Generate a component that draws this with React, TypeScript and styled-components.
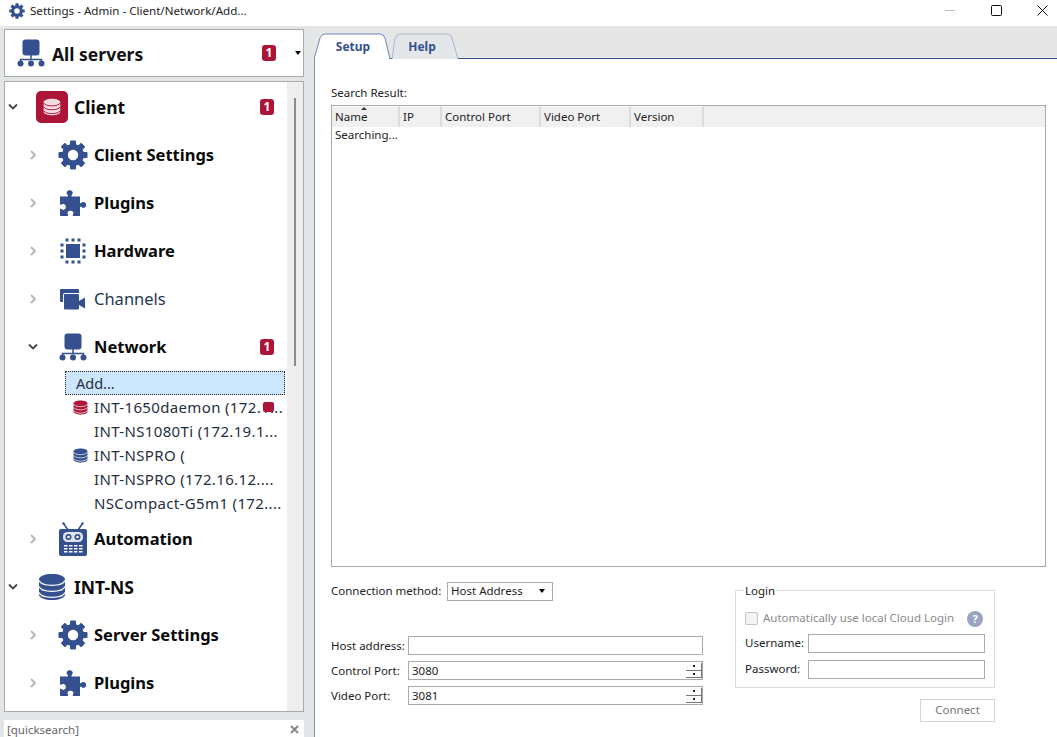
import React from "react";
import styled, { createGlobalStyle } from "styled-components";

const Global = createGlobalStyle`
  html, body { margin: 0; padding: 0; background: #fff; overflow: hidden; }
  * { box-sizing: border-box; }
  body { font-family: "Noto Sans", "Open Sans", sans-serif; color: #111; }
`;

const Blue = "#34508f";
const Red = "#ad1538";

const Window = styled.div`
  width: 1057px; height: 737px; display: flex; flex-direction: column; overflow: hidden; background: #fff;
`;
const TitleBar = styled.div`
  height: 26px; flex: none; display: flex; align-items: center; padding: 0 0 5px 9px; background: #fff;
`;
const TitleText = styled.span`
  font-size: 11.6px; margin-left: 5px; color: #222; flex: 1; white-space: nowrap;
`;
const WinButton = styled.span`
  width: 46px; height: 20px; display: flex; align-items: center; justify-content: center; margin-right: ${p => p.$mr ?? 0}px;
`;
const Body = styled.div`flex: 1; display: flex; min-height: 0;`;
const Side = styled.div`
  width: 314px; flex: none; background: #e3e6e6; padding: 3px 10px 0 4px; display: flex; flex-direction: column;
`;
const ServerCombo = styled.div`
  height: 48px; flex: none; background: #fff; border: 1px solid #aaa; display: flex; align-items: center; padding-left: 12px;
`;
const ServerName = styled.span`font-size: 17.5px; font-weight: 700; margin: 2px 0 0 7px; flex: 1;`;
const Badge = styled.span`
  width: 14px; height: 16px; border-radius: 3px; background: ${Red}; color: #fff; font-size: 12px; font-weight: 700;
  display: flex; align-items: center; justify-content: center; line-height: 1; flex: none;
`;
const ComboArrow = styled.span`
  width: 0; height: 0; border-left: 3.5px solid transparent; border-right: 3.5px solid transparent; border-top: 4px solid #000;
  margin: 0 2px 0 19px;
`;
const TreeBox = styled.div`
  margin-top: 4px; height: 631px; flex: none; background: #fff; border: 1px solid #aaa; display: flex; overflow: hidden;
`;
const Tree = styled.div`flex: 1; min-width: 0; padding-top: 1px; overflow: hidden;`;
const ScrollTrack = styled.div`width: 16px; flex: none; background: #eeeeee; padding: 16px 7px 0 7px;`;
const ScrollThumb = styled.div`width: 2px; height: 268px; background: #8b8b8b;`;
const Row = styled.div`
  height: 48px; display: flex; align-items: center; padding-left: ${p => p.$level === 0 ? 0 : 20}px; padding-right: 13px;
`;
const Chevron = styled.span`width: 16px; flex: none; display: flex; justify-content: center;`;
const IconSlot = styled.span`
  flex: none; display: flex; align-items: center; justify-content: center;
  width: 32px; height: 32px; margin-left: ${p => p.$level === 0 ? 15 : 16}px; margin-right: ${p => p.$level === 0 ? 6 : 5}px;
`;
const RowLabel = styled.span`
  font-size: ${p => p.$level === 0 ? 17.5 : 16.5}px; font-weight: ${p => p.$light ? 400 : 700}; flex: 1; white-space: nowrap;
  padding-bottom: ${p => p.$level === 0 ? 0 : 2}px;
  color: ${p => p.$light ? "#25384f" : "#0a0a0a"};
`;
const SubRow = styled.div`
  height: 24px; display: flex; align-items: center; margin-left: 68px; width: 214px; position: relative;
`;
const SubIcon = styled.span`width: 15px; flex: none; margin-right: 6px; display: flex;`;
const SubLabel = styled.span`font-size: 15px; letter-spacing: 0.35px; color: #1f2f40; white-space: nowrap; overflow: hidden;`;
const SelectedRow = styled.div`
  height: 24px; margin-left: 60px; width: 220px; background: #cbe6fd; border: 1px dotted #222; display: flex; align-items: center; padding-left: 10px;
  font-size: 14.5px; color: #1f2f40;
`;
const Overdot = styled.span`
  position: absolute; left: 190px; top: 7px; width: 11px; height: 10px; border-radius: 2px; background: ${Red};
`;
const QuickSearch = styled.div`
  margin-top: 8px; height: 18px; flex: none; background: #fff; display: flex; align-items: center; justify-content: space-between; padding: 0 5px 0 3px;
  font-size: 11.5px; color: #666;
`;
const Main = styled.div`flex: 1; min-width: 0; display: flex; flex-direction: column; background: #fff;`;
const TabStrip = styled.div`
  height: 33px; flex: none; background: #e6e6e6; border-bottom: 1px solid #34508f; display: flex; align-items: flex-end; position: relative;
`;
const Tab = styled.div`
  position: relative; width: ${p => p.$w}px; height: 26px; margin-left: ${p => p.$ml}px; margin-bottom: -1px; display: flex; align-items: center; justify-content: center;
  padding: 1px ${p => p.$pr ?? 0}px 0 0;
  font-size: 12px; font-weight: 700; color: ${Blue}; z-index: ${p => p.$active ? 2 : 1};
  & > svg { position: absolute; left: 0; top: 0; }
  & > span { position: relative; }
`;
const Panel = styled.div`
  flex: 1; min-height: 0; border-left: 1px solid #7c8fb8; padding: 26px 11px 15px 16px; display: flex; flex-direction: column; font-size: 11.5px;
`;
const PanelCaption = styled.div`height: 21px; line-height: 15px; color: #222;`;
const Table = styled.div`
  height: 462px; flex: none; border: 1px solid #aaa; background: #fff;
`;
const HeaderRow = styled.div`display: flex; height: 21px; background: #f0f0f0;`;
const HeaderCell = styled.div`
  width: ${p => p.$w}px; flex: none; border-right: 2px solid #dcdcdc; border-top: 1px solid #fff; padding-left: 3px; line-height: 19px; position: relative; color: #222;
`;
const SortMark = styled.span`
  position: absolute; left: 29px; top: 0; width: 0; height: 0; border-left: 3px solid transparent; border-right: 3px solid transparent; border-bottom: 3px solid #333;
`;
const Searching = styled.div`padding: 0 0 0 3px; line-height: 15px; color: #222;`;
const Bottom = styled.div`display: flex; margin-top: 14px; gap: 32px; align-items: flex-start;`;
const FormCol = styled.div`width: 372px; flex: none; display: flex; flex-direction: column;`;
const MethodRow = styled.div`display: flex; align-items: center; height: 20px; margin-bottom: 35px;`;
const MethodLabel = styled.span`width: 116px; flex: none; color: #222; white-space: nowrap; padding-bottom: 2px;`;
const Select = styled.div`
  width: 106px; height: 19px; border: 1px solid #aaa; display: flex; align-items: center; justify-content: space-between; padding: 0 7px 2px 3px; color: #222;
`;
const SelectArrow = styled.span`
  width: 0; height: 0; border-left: 3.5px solid transparent; border-right: 3.5px solid transparent; border-top: 4px solid #000; margin-top: 2px;
`;
const FieldRow = styled.div`display: flex; align-items: center; height: 19px; margin-bottom: 6px;`;
const LoginFieldRow = styled(FieldRow)`margin-bottom: 7px;`;
const FieldLabel = styled.span`width: ${p => p.$w}px; flex: none; color: #222; white-space: nowrap;`;
const LoginLabel = styled(FieldLabel)`padding-bottom: 3px;`;
const Input = styled.div`
  flex: 1; height: 19px; border: 1px solid #aaa; display: flex; align-items: center; justify-content: space-between; padding-left: 3px; color: #222;
`;
const Spinner = styled.span`
  width: 16px; height: 15px; flex: none; display: flex; flex-direction: column; border-right: 1px solid #777; border-bottom: 1px solid #777;
`;
const SpinPart = styled.span`
  flex: 1; display: flex; align-items: center; justify-content: center; border-bottom: ${p => p.$up ? "1px solid #777" : "none"};
  &::before { content: ""; width: 2px; height: 2px; background: #222; }
`;
const LoginCol = styled.div`width: 260px; flex: none; display: flex; flex-direction: column; align-items: flex-end; margin-top: 9px;`;
const LoginGroup = styled.div`
  width: 260px; height: 98px; border: 1px solid #dcdcdc; padding: 20px 9px 0 9px; position: relative;
`;
const Legend = styled.span`
  position: absolute; left: 8px; top: -9px; background: #fff; padding: 0 1px; color: #222; line-height: 17px;
`;
const CheckRow = styled.div`display: flex; align-items: center; height: 15px; margin-bottom: 8px; color: #8a8a8a;`;
const CheckBox = styled.span`
  width: 13px; height: 13px; border: 1px solid #c4c4c4; border-radius: 2px; background: #f4f4f4; margin-right: 5px; flex: none;
`;
const CheckText = styled.span`flex: 1; white-space: nowrap; padding-bottom: 2px;`;
const Help = styled.span`
  width: 16px; height: 16px; border-radius: 50%; background: #98a4c2; color: #fff; font-size: 11px; font-weight: 700; display: flex; align-items: center; justify-content: center; margin-right: 2px;
`;
const ConnectButton = styled.div`
  width: 75px; height: 23px; margin-top: 11px; border: 1px solid #d4d4d4; color: #777; display: flex; align-items: center; justify-content: center; padding-bottom: 2px;
`;

const Right = () => <svg width="8" height="10" viewBox="0 0 8 10"><path d="M2 1l4 4-4 4" fill="none" stroke="#b4b4b4" strokeWidth="1.8" /></svg>;
const Down = () => <svg width="10" height="8" viewBox="0 0 10 8"><path d="M1 1.5l4 4 4-4" fill="none" stroke="#444" strokeWidth="1.8" /></svg>;

const Gear = ({ size = 30 }: { size?: number }) => {
  const teeth = Array.from({ length: 8 }, (_, i) => i * 45);
  return (
    <svg width={size} height={size} viewBox="0 0 30 30">
      {teeth.map(a => <rect key={a} x="12" y="0.5" width="6" height="6" rx="1" fill={Blue} transform={`rotate(${a} 15 15)`} />)}
      <circle cx="15" cy="15" r="11" fill={Blue} />
      <circle cx="15" cy="15" r="5.2" fill="#fff" />
    </svg>
  );
};
const Puzzle = () => (
  <svg width="28" height="28" viewBox="0 0 28 28">
    <path fill={Blue} d="M1 7.500h7.500c.8 0 .8-.8.2-1.400C7.600 5 7.400 3.800 8 2.700 8.700 1.400 10.100 1 11.300 1.200c1.500.3 2.600 1.500 2.400 3-.1.800-.6 1.400-1.100 2-.5.6-.3 1.300.5 1.300H21v6c0 .7.700.9 1.200.4.700-.7 1.200-.9 2-.9 1.800.2 3 1.300 3 2.900 0 1.700-1.300 2.800-3 2.900-1 .1-1.500-.3-2-1-.5-.5-1.200-.2-1.200.5V27h-6.500c-.8 0-1-.8-.6-1.400.7-1 .7-2.200-.1-3.100-1.400-1.300-4.300-1.100-5.100.6-.4.900-.2 1.800.3 2.500.5.600.2 1.400-.5 1.400H1v-6.500c0-.7.600-.9 1.200-.5.900.6 2 .9 3 .5 1.500-.6 2-2.400 1.400-3.800-.6-1.500-2.600-2-4-1.200-.7.400-1.600.4-1.600-.5z" />
  </svg>
);
const Chip = () => (
  <svg width="26" height="26" viewBox="0 0 26 26">
    <rect x="6" y="6" width="14" height="14" fill={Blue} />
    {[5.500, 11.500, 17.500].map(p => <React.Fragment key={p}>
      <rect x={p} y="0.500" width="3" height="3" fill={Blue} />
      <rect x={p} y="22.500" width="3" height="3" fill={Blue} />
      <rect x="0.500" y={p} width="3" height="3" fill={Blue} />
      <rect x="22.500" y={p} width="3" height="3" fill={Blue} />
    </React.Fragment>)}
  </svg>
);
const Camera = () => (
  <svg width="26" height="21" viewBox="0 0 26 21">
    <path fill={Blue} d="M1 0h17a1 1 0 0 1 1 1v3H5a2 2 0 0 0-2 2v7H1a1 1 0 0 1-1-1V1a1 1 0 0 1 1-1z" />
    <rect x="4" y="5" width="15" height="15.500" rx="1" fill={Blue} />
    <path fill={Blue} d="M19 12l6-3.500v11L19 16z" />
  </svg>
);
const Net = ({ size = 28 }: { size?: number }) => (
  <svg width={size} height={size} viewBox="0 0 28 28">
    <rect x="5.500" y="0.500" width="17" height="16" rx="3" fill={Blue} />
    <path d="M14 16v5M3.500 24v-3.500h21V24" fill="none" stroke={Blue} strokeWidth="1.500" />
    <circle cx="3.500" cy="24.500" r="3" fill={Blue} />
    <circle cx="14" cy="24.500" r="3" fill={Blue} />
    <circle cx="24.500" cy="24.500" r="3" fill={Blue} />
  </svg>
);
const Database = ({ size = 28, color = Blue, line = "#fff" }: { size?: number; color?: string; line?: string }) => (
  <svg width={size} height={size} viewBox="0 0 28 28">
    <path fill={color} d="M1 6.500C1 3 7 1 14 1s13 2 13 5.500v15C27 25 21 27 14 27S1 25 1 21.500z" />
    <path d="M1 7.500C2.500 11 8 12.300 14 12.300S25.500 11 27 7.500M1 13.500C2.500 17 8 18.300 14 18.300S25.500 17 27 13.500M1 19.500C2.500 23 8 24.300 14 24.300S25.500 23 27 19.500" fill="none" stroke={line} strokeWidth="1.300" />
  </svg>
);
const ClientIcon = () => (
  <svg width="32" height="32" viewBox="0 0 32 32">
    <rect width="32" height="32" rx="5" fill={Red} />
    <g transform="translate(7 7) scale(0.64)">
      <path fill="#f6dbe0" d="M1 6.500C1 3 7 1 14 1s13 2 13 5.500v15C27 25 21 27 14 27S1 25 1 21.500z" />
      <path d="M1 7.500C2.500 11 8 12.300 14 12.300S25.500 11 27 7.500M1 13.500C2.500 17 8 18.300 14 18.300S25.500 17 27 13.500M1 19.500C2.500 23 8 24.300 14 24.300S25.500 23 27 19.500" fill="none" stroke={Red} strokeWidth="1.500" />
    </g>
  </svg>
);
const Robot = () => (
  <svg width="30" height="34" viewBox="0 0 30 34">
    <circle cx="5.500" cy="1.500" r="1.200" fill={Blue} /><circle cx="24.500" cy="1.500" r="1.200" fill={Blue} />
    <path d="M10 8L5.500 1.500M20 8l4.500-6.500" stroke={Blue} strokeWidth="1.500" />
    <rect x="1" y="7" width="28" height="27" rx="2" fill={Blue} />
    <rect x="5" y="10" width="20" height="10" rx="4.500" fill="#dfe4ef" />
    <circle cx="10.500" cy="15" r="3" fill={Blue} /><circle cx="19.500" cy="15" r="3" fill={Blue} />
    <circle cx="10.500" cy="15" r="1.300" fill="#fff" /><circle cx="19.500" cy="15" r="1.300" fill="#fff" />
    {[23, 26, 29].map(y => [6, 11, 16, 21].map(x => <rect key={`${x}-${y}`} x={x} y={y} width="3.500" height="1.500" fill="#fff" />))}
  </svg>
);

const TreeRow = ({ level, open, icon, label, light, badge }: { level: number; open?: boolean; icon: React.ReactNode; label: string; light?: boolean; badge?: boolean }) => (
  <Row $level={level}>
    <Chevron>{open ? <Down /> : <Right />}</Chevron>
    <IconSlot $level={level}>{icon}</IconSlot>
    <RowLabel $level={level} $light={light}>{label}</RowLabel>
    {badge && <Badge>1</Badge>}
  </Row>
);

const App = () => (
  <Window>
    <Global />
    <TitleBar>
      <Gear size={16} />
      <TitleText>Settings - Admin - Client/Network/Add...</TitleText>
      <WinButton>
        <svg width="11" height="2"><rect width="10" height="1" fill="#bbb" /></svg>
      </WinButton>
      <WinButton>
        <svg width="11" height="11"><rect x="0.500" y="0.500" width="10" height="10" rx="1" fill="none" stroke="#111" /></svg>
      </WinButton>
      <WinButton $mr={-8}>
        <svg width="11" height="11"><path d="M0.500 0.500l10 10M10.500 0.500l-10 10" stroke="#111" /></svg>
      </WinButton>
    </TitleBar>
    <Body>
      <Side>
        <ServerCombo>
          <Net />
          <ServerName>All servers</ServerName>
          <Badge>1</Badge>
          <ComboArrow />
        </ServerCombo>
        <TreeBox>
          <Tree>
            <TreeRow level={0} open icon={<ClientIcon />} label="Client" badge />
            <TreeRow level={1} icon={<Gear />} label="Client Settings" />
            <TreeRow level={1} icon={<Puzzle />} label="Plugins" />
            <TreeRow level={1} icon={<Chip />} label="Hardware" />
            <TreeRow level={1} icon={<Camera />} label="Channels" light />
            <TreeRow level={1} open icon={<Net />} label="Network" badge />
            <SelectedRow>Add...</SelectedRow>
            <SubRow>
              <SubIcon><Database size={15} color={Red} /></SubIcon>
              <SubLabel>INT-1650daemon (172.1...</SubLabel>
              <Overdot />
            </SubRow>
            <SubRow>
              <SubIcon />
              <SubLabel>INT-NS1080Ti (172.19.1...</SubLabel>
            </SubRow>
            <SubRow>
              <SubIcon><Database size={15} /></SubIcon>
              <SubLabel>INT-NSPRO (</SubLabel>
            </SubRow>
            <SubRow>
              <SubIcon />
              <SubLabel>INT-NSPRO (172.16.12....</SubLabel>
            </SubRow>
            <SubRow>
              <SubIcon />
              <SubLabel>NSCompact-G5m1 (172....</SubLabel>
            </SubRow>
            <TreeRow level={1} icon={<Robot />} label="Automation" />
            <TreeRow level={0} open icon={<Database />} label="INT-NS" />
            <TreeRow level={1} icon={<Gear />} label="Server Settings" />
            <TreeRow level={1} icon={<Puzzle />} label="Plugins" />
          </Tree>
          <ScrollTrack><ScrollThumb /></ScrollTrack>
        </TreeBox>
        <QuickSearch>
          <span>[quicksearch]</span>
          <svg width="9" height="9" viewBox="0 0 9 9"><path d="M1 1l7 7M8 1l-7 7" stroke="#888" strokeWidth="2" /></svg>
        </QuickSearch>
      </Side>
      <Main>
        <TabStrip>
          <Tab $w={78} $ml={0} $active>
            <svg width="78" height="26" viewBox="0 0 78 26"><path d="M0 26L6 5Q7.500 1 11 1H66Q69.500 1 71 5L76 26" fill="#fff" stroke="#6f86b8" /></svg>
            <span>Setup</span>
          </Tab>
          <Tab $w={70} $ml={-2} $pr={6}>
            <svg width="70" height="26" viewBox="0 0 70 26"><path d="M2 26L5 6Q6.500 1 10 1H58Q60.500 1 62 5L68 26" fill="#e4e7ea" stroke="#aab5c8" /></svg>
            <span>Help</span>
          </Tab>
        </TabStrip>
        <Panel>
          <PanelCaption>Search Result:</PanelCaption>
          <Table>
            <HeaderRow>
              <HeaderCell $w={68}>Name<SortMark /></HeaderCell>
              <HeaderCell $w={42}>IP</HeaderCell>
              <HeaderCell $w={99}>Control Port</HeaderCell>
              <HeaderCell $w={90}>Video Port</HeaderCell>
              <HeaderCell $w={73}>Version</HeaderCell>
            </HeaderRow>
            <Searching>Searching...</Searching>
          </Table>
          <Bottom>
            <FormCol>
              <MethodRow>
                <MethodLabel>Connection method:</MethodLabel>
                <Select>Host Address<SelectArrow /></Select>
              </MethodRow>
              <FieldRow>
                <FieldLabel $w={77}>Host address:</FieldLabel>
                <Input />
              </FieldRow>
              <FieldRow>
                <FieldLabel $w={77}>Control Port:</FieldLabel>
                <Input>3080<Spinner><SpinPart $up /><SpinPart /></Spinner></Input>
              </FieldRow>
              <FieldRow>
                <FieldLabel $w={77}>Video Port:</FieldLabel>
                <Input>3081<Spinner><SpinPart $up /><SpinPart /></Spinner></Input>
              </FieldRow>
            </FormCol>
            <LoginCol>
              <LoginGroup>
                <Legend>Login</Legend>
                <CheckRow>
                  <CheckBox />
                  <CheckText>Automatically use local Cloud Login</CheckText>
                  <Help>?</Help>
                </CheckRow>
                <LoginFieldRow>
                  <LoginLabel $w={63}>Username:</LoginLabel>
                  <Input />
                </LoginFieldRow>
                <LoginFieldRow>
                  <LoginLabel $w={63}>Password:</LoginLabel>
                  <Input />
                </LoginFieldRow>
              </LoginGroup>
              <ConnectButton>Connect</ConnectButton>
            </LoginCol>
          </Bottom>
        </Panel>
      </Main>
    </Body>
  </Window>
);

export default App;
